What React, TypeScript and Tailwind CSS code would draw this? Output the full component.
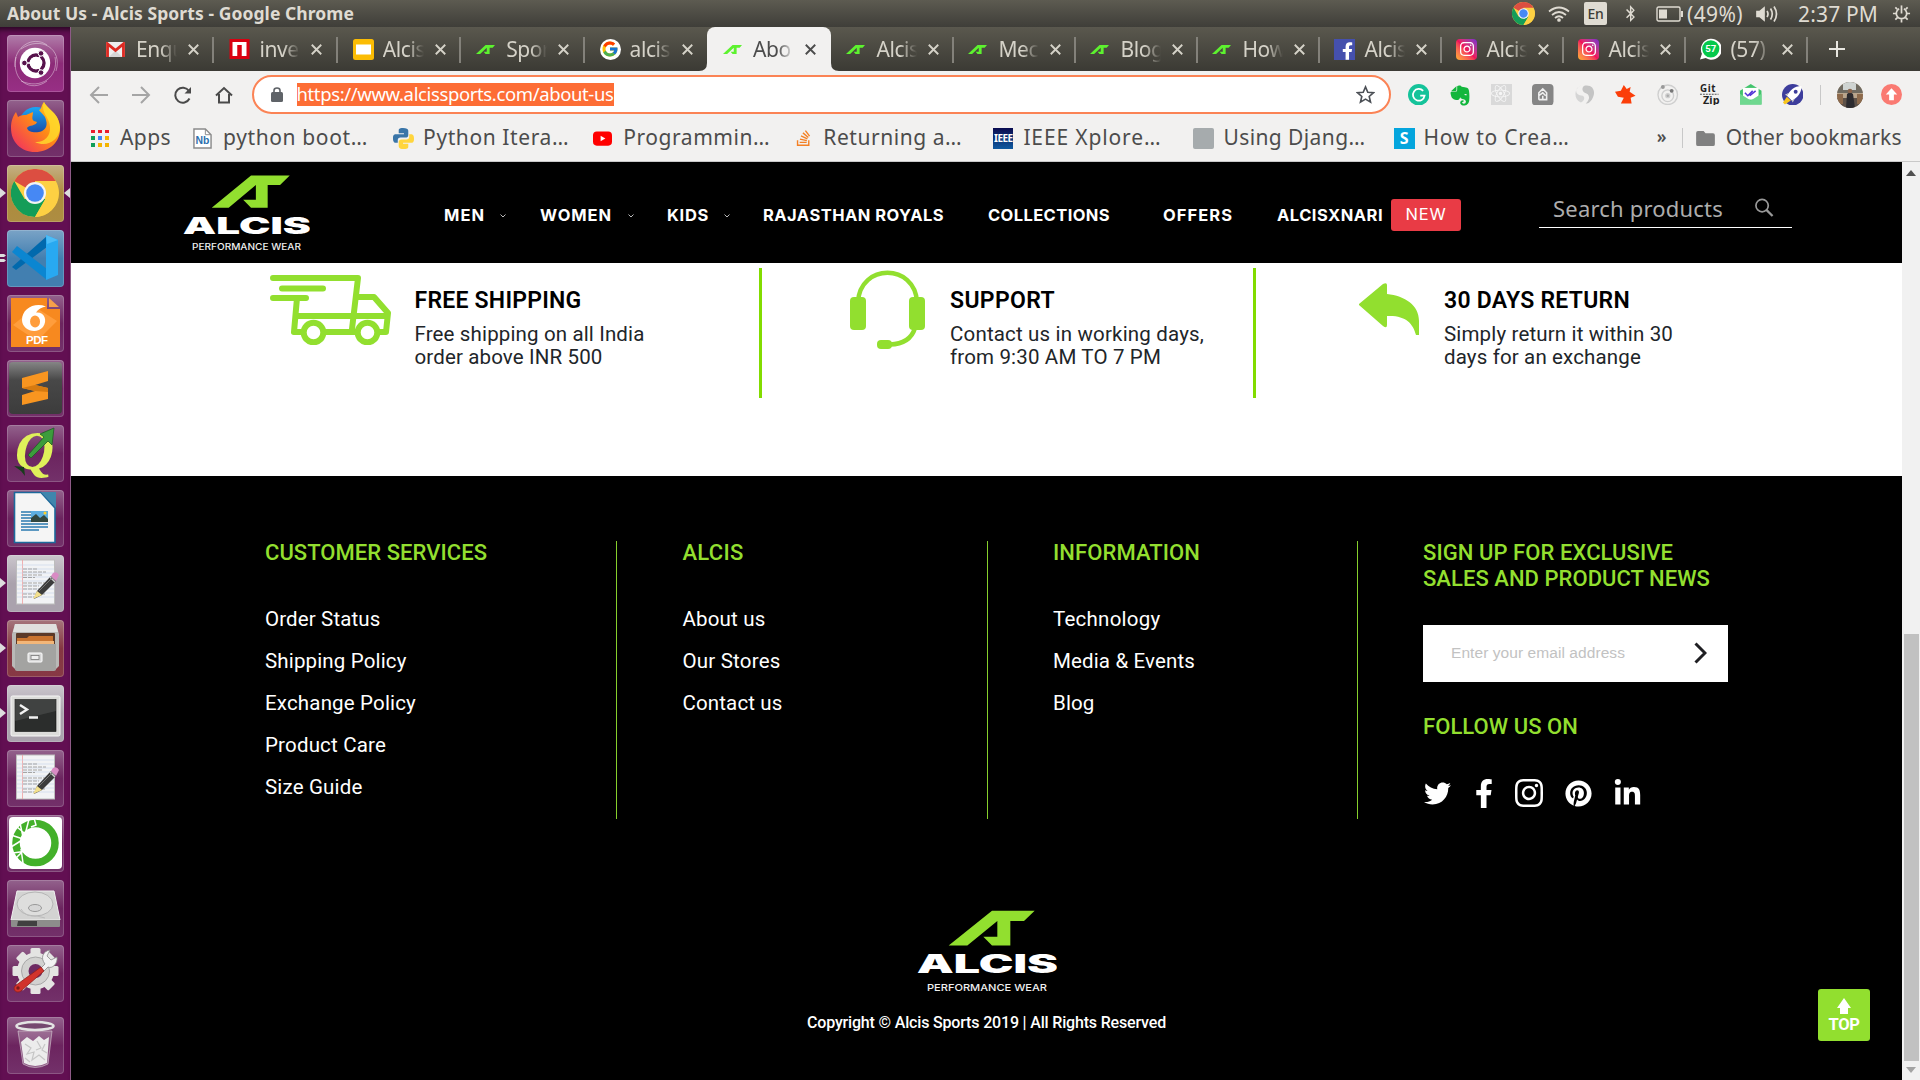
import { useLayoutEffect, useRef, useState, type ReactNode } from "react";
import { FaBluetoothB, FaFacebookF, FaInstagram, FaLinkedinIn, FaPinterest, FaStackOverflow, FaTwitter, FaEvernote, FaReact } from "react-icons/fa";
import { FcGoogle } from "react-icons/fc";

/** A single line of text whose letter spacing is adjusted to span a given width. */
function Fit({ w, className = "", children }: { w: number; className?: string; children: string }) {
  const ref = useRef<HTMLSpanElement>(null);
  const [spacing, setSpacing] = useState(0);
  useLayoutEffect(() => {
    if (ref.current) setSpacing((w - ref.current.getBoundingClientRect().width) / children.length);
  }, []);
  return (
    <span ref={ref} className={`inline-block whitespace-nowrap ${className}`} style={{ letterSpacing: `${spacing}px` }}>
      {children}
    </span>
  );
}

function Mark({ className }: { className: string }) {
  return (
    <svg viewBox="507 62 258 105" preserveAspectRatio="none" className={className} fill="currentColor">
      <path d="M507 167 637 62H765L733 93H692V167H637L611 141H653V93L563 167Z" />
    </svg>
  );
}

function BrandLogo({ className }: { className: string }) {
  return (
    <svg viewBox="412 60 420 248" preserveAspectRatio="none" className={className}>
      <path fill="#92df2f" d="M507 167 637 62H765L733 93H692V167H637L611 141H653V93L563 167Z" />
      <text x="411" y="251" fontFamily="Inter" fontWeight="900" fontSize="76" fill="#fff" textLength="424" lengthAdjust="spacingAndGlyphs">ALCIS</text>
      <text x="442" y="304" fontFamily="Inter" fontWeight="500" fontSize="29" fill="#f0f0f0" textLength="360" lengthAdjust="spacingAndGlyphs">PERFORMANCE WEAR</text>
    </svg>
  );
}

function ChromeIcon({ className }: { className: string }) {
  return (
    <svg viewBox="0 0 48 48" className={className}>
      <circle cx="24" cy="24" r="24" fill="#fdd043" />
      <path d="M24 24 3.2 12A24 24 0 0 1 44.8 12H24Z" fill="#dc4e41" />
      <path d="M3.2 12A24 24 0 0 0 24 48L34.4 30 13.6 30Z" fill="#149d58" />
      <path d="M24 13H44.8A24 24 0 0 1 24 48L34.4 30Z" fill="#fdd043" />
      <circle cx="24" cy="24" r="11" fill="#f3f3f3" />
      <circle cx="24" cy="24" r="8.8" fill="#4688f4" />
    </svg>
  );
}

/* ---------- launcher icons, each drawn on a 57 × 57 tile ---------- */

const svgTile = "block h-[57px] w-[57px]";

const UbuntuIcon = () => (
  <svg viewBox="0 0 57 57" className={svgTile}>
    <g fill="none" stroke="#fff" strokeOpacity=".4">
      <path d="M8 32C6 12 26 0 40 10M14 14C34 0 56 14 49 36M48 22C52 42 34 55 14 46M40 46C24 58 4 46 9 22" />
    </g>
    <circle cx="28" cy="28" r="15.2" fill="#fff" />
    <circle cx="29" cy="28" r="8" fill="none" stroke="#57124c" strokeWidth="3.4" />
    <path d="M29 28H15M29 28 36 16M29 28 36 40" stroke="#fff" strokeWidth="1.4" />
    <circle cx="29" cy="28" r="6.2" fill="#fff" />
    <g fill="#57124c" stroke="#fff" strokeWidth="1"><circle cx="17.4" cy="28" r="2.8" /><circle cx="34" cy="18.4" r="2.8" /><circle cx="34" cy="37.6" r="2.8" /></g>
  </svg>
);

const FirefoxIcon = () => (
  <svg viewBox="0 0 57 57" className={svgTile}>
    <defs>
      <linearGradient id="fx" x1="1" y1="0" x2="0" y2="1"><stop offset="0" stopColor="#ffe226" /><stop offset=".45" stopColor="#ff8a16" /><stop offset="1" stopColor="#f0246a" /></linearGradient>
      <linearGradient id="fb" x1="0" y1="0" x2="0" y2="1"><stop offset="0" stopColor="#19a7f5" /><stop offset="1" stopColor="#1b2f8e" /></linearGradient>
    </defs>
    <circle cx="29" cy="24" r="17" fill="url(#fb)" />
    <path d="M9 12 11 17C14 15 17 15 19 15L26 12C26 16 24 19 27 21L30 22C29 26 22 25 20 28C21 32 27 33 32 32C38 31 41 26 39 20C38 15 33 12 32 10C35 9 34 5 37 2C41 10 52 13 53 27C54 42 42 52 28 52C14 52 4 42 4 28C4 21 6 16 9 12Z" fill="url(#fx)" />
    <path d="M37 2C33 12 43 18 43 27C44 37 36 43 28 42C40 48 53 40 53 27C52 13 41 10 37 2Z" fill="#ffdc2c" fillOpacity=".8" />
  </svg>
);

const CodeIcon = () => (
  <svg viewBox="0 0 57 57" className={svgTile}>
    <path d="M5 37 9 40 40 17V6Z" fill="#0069ad" />
    <path d="M5 22 10 16 40 39V50Z" fill="#0b86d1" />
    <path d="M39 5 51 10V45L39 50Z" fill="#28a9f1" />
    <path d="M39 5 51 10 40 14Z" fill="#4cbdf8" />
  </svg>
);

const PdfIcon = () => (
  <svg viewBox="0 0 57 57" className={svgTile}>
    <path d="M4 3H40V14H53V52H4Z" fill="#f7891f" />
    <path d="M42 3 52 12H42Z" fill="#f7a04a" />
    <path d="M6 30 28 12 50 26 30 46Z" fill="#ff9d3c" />
    <path fillRule="evenodd" d="M39 11.500C27 7 15 14 15 25C15 35 29 40 36 32C41 25 37 16.500 29 17.500C31 14 35 12 39 11.500ZM28 20.500A5 6 0 1 0 28.100 32.500A5 6 0 0 0 28 20.500Z" fill="#fff" />
    <text x="19" y="49" fontFamily="Liberation Sans" fontWeight="700" fontSize="11.5" fill="#fff" textLength="22">PDF</text>
  </svg>
);

const SublimeIcon = () => (
  <svg viewBox="0 0 57 57" className={svgTile}>
    <defs><linearGradient id="sb" x1="0" y1="0" x2="0" y2="1"><stop offset="0" stopColor="#858585" /><stop offset=".35" stopColor="#484848" /><stop offset="1" stopColor="#3c3c3c" /></linearGradient></defs>
    <rect x="2" y="2" width="53" height="52" rx="4" fill="url(#sb)" />
    <path d="M41 11V21L28 25 41 28V39L15 45V35L28 31 15 28V18Z" fill="#f89520" />
    <path d="M15 28 28 25 41 28V32L28 31Z" fill="#d67a10" />
  </svg>
);

const QgisIcon = () => (
  <svg viewBox="0 0 57 57" className={svgTile}>
    <text x="8" y="44" fontFamily="Liberation Serif" fontWeight="700" fontStyle="italic" fontSize="54" fill="#dff05a" textLength="39" lengthAdjust="spacingAndGlyphs">Q</text>
    <path d="M47 3 45 20 41 16 24 33 21 30 37 12 33 9Z" fill="#3c9c3c" stroke="#1f5c24" strokeWidth=".8" />
    <path d="M7 41 17 42 18 51 14 46Z" fill="#183c1c" />
  </svg>
);

const WriterIcon = () => (
  <svg viewBox="0 0 57 57" className={svgTile}>
    <path d="M7.5 2.500H34L48 18V52.500H7.500Z" fill="#f5f5f5" stroke="#1c6a9c" strokeWidth="1.600" />
    <path d="M34 2H49V18Z" fill="#3f86ad" />
    <path d="M14 22H24M14 25H24M14 28H24M14 31H24M14 34H41M14 37H41M14 40H32" stroke="#2a7ab0" strokeWidth="1.4" />
    <rect x="24" y="21" width="17" height="11" fill="#5eaee0" />
    <path d="M24 32V28L29 24 33 28 37 25 41 29V32Z" fill="#33473f" />
    <circle cx="38" cy="23" r="1.500" fill="#ffd02c" />
  </svg>
);

const EditorIcon = () => (
  <svg viewBox="0 0 57 57" className={svgTile}>
    <rect x="9.500" y="5" width="38" height="44" fill="#f2f3f5" stroke="#bdbdbd" />
    <path d="M15.500 5V49" stroke="#f0a0a0" strokeWidth=".8" />
    <path d="M10 10H47M10 14H47M10 18H47M10 22H47M10 26H47M10 30H47M10 34H47M10 38H47M10 42H47" stroke="#c5d5ea" strokeWidth=".6" />
    <path d="M16 14H30M16 17H39M16 20H36M16 22.500H28M16 28H38M16 31H32M16 34H36M16 39H38M16 42H30" stroke="#a5a5a5" strokeWidth="1" strokeDasharray="4 1" />
    <path d="M30 36 44 21 49 26 35 40 27 44Z" fill="#3c3c3c" />
    <path d="M30 36 35 40 26 44Z" fill="#f3e08c" />
    <path d="M44 21 46 18Q50 16 52 20L49 26Z" fill="#d98bc4" />
    <path d="M43 22 48 27" stroke="#ccc" strokeWidth="1.600" />
    <path d="M32 36 45 23" stroke="#777" />
  </svg>
);

const FilesIcon = () => (
  <svg viewBox="0 0 57 57" className={svgTile}>
    <path d="M8 4H49L52 14V46L48 50H9L5 46V14Z" fill="#b9b9b7" />
    <path d="M8 4H49L51 12H6Z" fill="#e0e0de" />
    <rect x="9" y="13" width="39" height="12" rx="1" fill="#5b3a28" />
    <path d="M10 18H20L22 16H46V25H10Z" fill="#c9742f" />
    <path d="M10 21H47V25H10Z" fill="#f2b679" />
    <path d="M8 24H49V49Q49 51 47 51H10Q8 51 8 49Z" fill="#a3a3a1" />
    <rect x="21" y="33" width="14" height="9" rx="1" fill="#d6d6d6" stroke="#fff" />
    <rect x="24" y="35.500" width="8" height="4" fill="#eee" stroke="#777" strokeWidth=".8" />
  </svg>
);

const TerminalIcon = () => (
  <svg viewBox="0 0 57 57" className={svgTile}>
    <rect x="4" y="11" width="49" height="40" rx="1.500" fill="#dcdcda" stroke="#f6f6f6" />
    <rect x="8" y="14.500" width="41" height="32" fill="#2b2d2c" stroke="#111" strokeWidth=".6" />
    <path d="M8 14.500H49V26L8 36Z" fill="#fff" fillOpacity=".1" />
    <path d="M13 20 20 24.500 13 29M22 32.500H31" fill="none" stroke="#f3f3f3" strokeWidth="2.400" />
  </svg>
);

const AnacondaIcon = () => (
  <svg viewBox="0 0 57 57" className={svgTile}>
    <rect x="2" y="2" width="53" height="52" rx="4" fill="#fff" />
    <circle cx="28.500" cy="28" r="19.500" fill="none" stroke="#43b02a" strokeWidth="7.500" />
    <path d="M4 20 22 26M4 32 20 22M6 38 20 36M10 12 22 22M13 8 16 22M22 4 18 20M8 44 18 34M16 48 14 34M27 3 29 10 24 12" stroke="#fff" strokeWidth="1.500" fill="none" />
  </svg>
);

const DiskIcon = () => (
  <svg viewBox="0 0 57 57" className={svgTile}>
    <path d="M10 11H47L53 40H4Z" fill="#d3d3d2" stroke="#f0f0f0" />
    <path d="M4 40H53V46Q53 47 52 47H5Q4 47 4 46Z" fill="#8d8d8b" />
    <path d="M11 41H30V46H10Z" fill="#404040" />
    <ellipse cx="28" cy="24" rx="18" ry="12" fill="#dededd" stroke="#b5b5b5" />
    <ellipse cx="28" cy="28" rx="6.500" ry="3.500" fill="#d6d6d6" stroke="#999" />
    <path d="M14 29Q18 37 30 36L38 38" fill="none" stroke="#bcbcbc" />
  </svg>
);

const teeth = [0, 45, 90, 135];
const SettingsIcon = () => (
  <svg viewBox="0 0 57 57" className={svgTile}>
    <g fill="#e4e4e2">
      {teeth.map((a) => <rect key={a} x="23.500" y="3" width="10" height="46" rx="1.500" transform={`rotate(${a} 28.5 26)`} />)}
      <circle cx="28.500" cy="26" r="18.500" />
    </g>
    <circle cx="28.500" cy="26" r="14" fill="#d2d2d0" stroke="#a9a9a9" />
    <circle cx="28.500" cy="26" r="7" fill="#6d2a62" />
    <path d="M34 23 38 19C33 13 36 6 43 5L40 11 44 15 50 12C51 19 45 24 41 22L37 26Z" fill="#f2f2f2" stroke="#8a8a8a" strokeWidth=".8" />
    <path d="M34 22 37 26 14 46C10 49 5 45 8 41Z" fill="#d2332c" stroke="#8e1f1c" strokeWidth=".8" />
    <circle cx="11" cy="43" r="1.700" fill="#7b1c1a" />
  </svg>
);

const TrashIcon = () => (
  <svg viewBox="0 0 57 57" className={svgTile}>
    <path d="M11 14H45L41 47Q28 54 16 47Z" fill="#fff" fillOpacity=".22" stroke="#d8d0d6" strokeOpacity=".6" />
    <path d="M14 25 20 20 26 24 32 19 37 23 42 20 40 46Q28 52 17 46Z" fill="#ececec" />
    <path d="M18 27 24 31 20 37 27 35 25 43 32 38 38 43M30 24 34 31 29 33M38 27 35 33 40 36M18 41 23 45" fill="none" stroke="#c6c6c6" strokeWidth="1.200" />
    <ellipse cx="28" cy="9" rx="18.500" ry="4" fill="#75476f" stroke="#e3e3e3" strokeWidth="2.600" />
  </svg>
);

const plain = "bg-linear-to-b from-[#93628d] via-[#6c245f] to-[#73316a]";
const tiles: { icon: ReactNode; bg: string; left?: number; right?: boolean }[] = [
  { icon: <UbuntuIcon />, bg: "bg-linear-to-b from-[#b07daa] via-[#8c2a78] to-[#982f85]" },
  { icon: <FirefoxIcon />, bg: plain },
  { icon: <ChromeIcon className="m-[4px] h-[48px] w-[48px]" />, bg: "bg-linear-to-b from-[#c5b083] via-[#ad8b3c] to-[#ad8d42]", left: 1, right: true },
  { icon: <CodeIcon />, bg: "bg-linear-to-b from-[#7aa3c6] via-[#427fb0] to-[#427fb0]", left: 2 },
  { icon: <PdfIcon />, bg: plain },
  { icon: <SublimeIcon />, bg: plain },
  { icon: <QgisIcon />, bg: plain },
  { icon: <WriterIcon />, bg: plain },
  { icon: <EditorIcon />, bg: "bg-linear-to-b from-[#cbc6cd] via-[#aaa2ad] to-[#aaa2ad]", left: 1 },
  { icon: <FilesIcon />, bg: "bg-linear-to-b from-[#a5757c] via-[#853642] to-[#873945]", left: 1 },
  { icon: <TerminalIcon />, bg: "bg-linear-to-b from-[#cbc6cd] via-[#aaa2ad] to-[#aaa2ad]", left: 1 },
  { icon: <EditorIcon />, bg: plain },
  { icon: <AnacondaIcon />, bg: plain },
  { icon: <DiskIcon />, bg: plain },
  { icon: <SettingsIcon />, bg: plain },
  { icon: <TrashIcon />, bg: plain },
];

function Launcher() {
  return (
    <aside className="flex h-[1053px] w-[71px] shrink-0 flex-col gap-2 border-r border-[#8d5a86] bg-[#620f52] pt-2 pl-[7px] shadow-[inset_0_6px_5px_-3px_#2c0825]">
      {tiles.map((t, i) => (
        <div key={i} className={`relative h-[57px] w-[57px] shrink-0 rounded-[4px] shadow-[inset_0_0_0_1px_rgba(255,255,255,0.18)] ${t.bg} ${i === 15 ? "mt-[7px]" : ""}`}>
          {t.icon}
          {t.left === 1 && <svg viewBox="0 0 6 10" className="absolute top-[23px] -left-[7px] h-[10px] w-[6px]"><path d="M0 0 6 5 0 10Z" fill="#ddd" /></svg>}
          {t.left === 2 && <svg viewBox="0 0 6 10" className="absolute top-[23px] -left-[7px] h-[10px] w-[6px]"><path d="M0 1H4L6 2.500 4 4H0ZM0 6H4L6 7.500 4 9H0Z" fill="#ddd" /></svg>}
          {t.right && <svg viewBox="0 0 6 10" className="absolute top-[23px] -right-[6px] h-[10px] w-[6px]"><path d="M6 0 0 5 6 10Z" fill="#ddd" /></svg>}
        </div>
      ))}
    </aside>
  );
}

/* ---------- desktop panel ---------- */

function TopPanel() {
  return (
    <div className="flex h-[27px] items-center bg-linear-to-b from-[#5d5b51] to-[#3f3e39] pl-[7px] text-[#dfdbd2]">
      <Fit w={347} className="text-[17.500px] leading-[27px] font-bold">About Us - Alcis Sports - Google Chrome</Fit>
      <div className="ml-auto flex h-[27px] w-[408px] items-center">
        <ChromeIcon className="h-[23px] w-[23px]" />
        <svg viewBox="0 0 22 16" className="ml-[13px] h-[16px] w-[22px]" fill="none" stroke="currentColor" strokeWidth="1.700">
          <path d="M1 5.500Q11-2.500 21 5.500M4 9Q11 3 18 9M7 12Q11 8.500 15 12" /><circle cx="11" cy="14" r="1" fill="currentColor" />
        </svg>
        <div className="ml-[14px] flex h-[23px] w-[23px] items-center justify-center rounded-[2px] bg-[#dfdbd2] text-[14px] font-medium tracking-tight text-[#3c3b37]">En</div>
        <FaBluetoothB className="ml-[15px] h-[17px] w-[17px]" />
        <svg viewBox="0 0 27 16" className="ml-[17px] h-[16px] w-[27px]" fill="none" stroke="currentColor" strokeWidth="1.400">
          <rect x="1" y="1" width="23" height="14" rx="1.500" /><path d="M26 5V11" strokeWidth="2" /><rect x="3" y="3.500" width="8" height="9" fill="currentColor" stroke="none" />
        </svg>
        <Fit w={56} className="ml-[4px] text-[21px] leading-[26px]">(49%)</Fit>
        <svg viewBox="0 0 24 18" className="ml-[13px] h-[18px] w-[24px]" fill="none" stroke="currentColor" strokeWidth="1.700">
          <path d="M1 6.500H4L8 3V15L4 11.500H1Z" fill="currentColor" /><path d="M11 6Q13 9 11 12M14.500 3.500Q18 9 14.500 14.500M18 1.500Q23 9 18 16.500" />
        </svg>
        <Fit w={80} className="ml-[18px] text-[21px] leading-[26px]">2:37 PM</Fit>
        <svg viewBox="0 0 20 20" className="ml-[14px] h-[19px] w-[19px]" fill="none" stroke="currentColor" strokeWidth="1.800">
          <path d="M7.500 5A5.500 5.500 0 1 0 12.500 5" /><path d="M10 1.500V10" />
          <path d="M10 16V19.500M4.500 10H1M19 10H15.500M6 14 3.500 16.500M14 14 16.500 16.500M5.500 5.500 3.500 3.500M14.500 5.500 16.500 3.500" />
        </svg>
      </div>
    </div>
  );
}

/* ---------- browser tabs ---------- */

const GmailIcon = () => (
  <svg viewBox="0 0 20 16" className="h-[15px] w-[19px]"><rect width="20" height="16" rx="1" fill="#eee" /><path d="M3 16 10 9 17 16Z" fill="#d5d5d5" /><path d="M1.500 16V2L10 9 18.500 2V16" fill="none" stroke="#dd2a22" strokeWidth="3" /></svg>
);
const NotebookIcon = () => (
  <svg viewBox="0 0 20 20" className="h-[20px] w-[21px]"><rect width="20" height="20" fill="#da0010" /><path d="M3 3H17V17H12V6H8V17H3Z" fill="#fff" /><path d="M8 6H12V17H8Z" fill="#da0010" /></svg>
);
const SlidesIcon = () => (
  <svg viewBox="0 0 21 21" className="h-[21px] w-[21px]"><rect width="21" height="21" rx="2.500" fill="#fbbc04" /><rect x="3" y="5.500" width="15" height="10" fill="#fff" /></svg>
);
const GoogleIcon = () => <span className="flex h-[21px] w-[21px] items-center justify-center rounded-full bg-white"><FcGoogle className="h-[18px] w-[18px]" /></span>;
const AlcisIcon = () => <Mark className="h-[9px] w-[19px] text-[#5df22f]" />;
const FbIcon = () => <span className="flex h-[21px] w-[21px] items-end justify-end bg-[#4550ad] pr-[2px] text-white"><FaFacebookF className="h-[18px] w-[11px]" /></span>;
const InstaIcon = () => <span className="flex h-[21px] w-[21px] items-center justify-center rounded-[4px] bg-linear-to-bl from-[#7a1fd0] via-[#f0105a] to-[#ffb02a] text-white"><FaInstagram className="h-[16px] w-[16px]" /></span>;
const WhatsIcon = () => (
  <svg viewBox="0 0 22 22" className="h-[22px] w-[22px]"><path d="M0 22 2 16A11 11 0 1 1 6 20.500Z" fill="#fff" /><circle cx="11.300" cy="10.800" r="9" fill="#06c94c" /><text x="5.500" y="14.500" fontSize="10" fontWeight="700" fontFamily="Roboto" fill="#fff">57</text></svg>
);

const tabs = [
  { t: "Enqu", icon: <GmailIcon /> }, { t: "inve", icon: <NotebookIcon /> }, { t: "Alcis", icon: <SlidesIcon /> }, { t: "Spor", icon: <AlcisIcon /> }, { t: "alcis", icon: <GoogleIcon /> },
  { t: "Abo", icon: <AlcisIcon /> },
  { t: "Alcis", icon: <AlcisIcon /> }, { t: "Mec", icon: <AlcisIcon /> }, { t: "Blog", icon: <AlcisIcon /> }, { t: "How", icon: <AlcisIcon /> },
  { t: "Alcis", icon: <FbIcon /> }, { t: "Alcis", icon: <InstaIcon /> }, { t: "Alcis", icon: <InstaIcon /> }, { t: "(57)", icon: <WhatsIcon /> },
];

const Cross = () => <svg viewBox="0 0 10 10" className="h-[11px] w-[11px]" stroke="currentColor" strokeWidth="1.700"><path d="M.7.7 9.300 9.300M9.300.7.7 9.300" /></svg>;

function TabStrip() {
  return (
    <div className="flex h-[44px] items-center bg-linear-to-b from-[#5a584e] to-[#3b3a34] pl-[19px] text-[#d5d2c8]">
      {tabs.map((tab, i) => {
        const active = i === 5;
        return (
          <div key={i} className={`relative flex h-[44px] shrink-0 items-center ${active ? "w-[124.5px] rounded-t-[8px] bg-[#f2f1f0] text-[#4c4c4c]" : i < 5 ? "w-[123.4px]" : "w-[122px]"}`}>
            <span className={`flex w-[21px] justify-start ${i > 5 ? "ml-[15px]" : "ml-[16px]"}`}>{tab.icon}</span>
            <span className="ml-[9px] w-[41px] overflow-hidden text-[21px] leading-[28px] tracking-[-0.02em] whitespace-nowrap [mask-image:linear-gradient(to_right,black_60%,transparent)]">{tab.t}</span>
            <span className="ml-[11px]"><Cross /></span>
            {!active && i !== 4 && <span className="absolute top-[10px] -right-px h-[26px] w-[2px] bg-[#83817a]" />}
            {active && (
              <>
                <svg viewBox="0 0 8 8" className="absolute bottom-0 -left-[8px] h-[8px] w-[8px]"><path d="M0 8Q8 8 8 0V8Z" fill="#f2f1f0" /></svg>
                <svg viewBox="0 0 8 8" className="absolute -right-[8px] bottom-0 h-[8px] w-[8px]"><path d="M8 8Q0 8 0 0V8Z" fill="#f2f1f0" /></svg>
              </>
            )}
          </div>
        );
      })}
      <svg viewBox="0 0 16 16" className="ml-[22px] h-[16px] w-[16px] text-[#e8e6e0]" stroke="currentColor" strokeWidth="2"><path d="M8 0V16M0 8H16" /></svg>
    </div>
  );
}

/* ---------- toolbar ---------- */

const NavIcon = ({ children, dim }: { children: ReactNode; dim?: boolean }) => (
  <svg viewBox="0 0 20 20" className={`h-[20px] w-[20px] shrink-0 ${dim ? "text-[#a5a5a5]" : "text-[#4a4a4a]"}`} fill="none" stroke="currentColor" strokeWidth="2">{children}</svg>
);

const extensions: ReactNode[] = [
  <svg viewBox="0 0 22 22"><circle cx="11" cy="11" r="11" fill="#15c39a" /><path d="M15.500 7A6 6 0 1 0 17 12H12.500" fill="none" stroke="#fff" strokeWidth="1.800" /></svg>,
  <FaEvernote className="h-[23px] w-[22px] scale-x-110 text-[#12b63c]" />,
  <span className="flex h-full w-full items-center justify-center bg-[#d9d9d9]"><FaReact className="h-[19px] w-[19px] text-[#f6f6f6]" /></span>,
  <svg viewBox="0 0 22 22"><rect width="22" height="22" rx="4" fill="#858585" /><path d="M7 16V9L11 5 15 9V16H7M7 12 11 9 14 12M11 16V12" fill="none" stroke="#eee" strokeWidth="1.600" /></svg>,
  <svg viewBox="0 0 22 22"><path d="M9 1C0 3 0 12 9 12C12 14 10 18 7 19C-2 15 1 2 9 1Z" fill="#d5d5d5" /><path d="M10 2C18 0 22 6 20 12C18 18 15 20 12 20C18 14 15 10 11 9C8 7 8 4 10 2Z" fill="#c4c4c4" /></svg>,
  <svg viewBox="0 0 22 22"><path d="M0 8 6 7 9 1 12 5 16 3 15 8 21 12 16 14 17 20H6L9 14 3 13Z" fill="#fb3e09" /></svg>,
  <svg viewBox="0 0 22 22" fill="none" stroke="#cfcfcf" strokeWidth="1.400"><circle cx="11" cy="11" r="10" /><circle cx="11" cy="12" r="6" /><circle cx="11" cy="12" r="2" fill="#aaa" /><circle cx="6" cy="3" r="2" fill="#999" stroke="none" /><circle cx="15" cy="7" r="2" fill="#777" stroke="none" /></svg>,
  <svg viewBox="0 0 22 22"><text x="1" y="8" fontFamily="Open Sans" fontWeight="700" fontSize="10" fill="#222" textLength="16">Git</text><path d="M1 10.500H20" stroke="#555" strokeDasharray="2 1" strokeWidth="1.200" /><text x="4" y="20.500" fontFamily="Open Sans" fontWeight="700" fontSize="11" fill="#222" textLength="17">Zip</text></svg>,
  <svg viewBox="0 0 22 22"><path d="M0 7 11 0 22 7V21H0Z" fill="#42c46c" /><rect x="3" y="4" width="16" height="12" fill="#fff" /><path d="M5 9 8 12 13 7M10 12 16 7" fill="none" stroke="#5336d6" strokeWidth="1.600" /><path d="M0 10 11 17 22 10V21H0Z" fill="#6fd88f" /></svg>,
  <svg viewBox="0 0 22 22"><circle cx="11" cy="11" r="11" fill="#3d3d9c" /><path d="M20 2C12 2 8 7 5 12L10 17C16 14 20 9 20 2Z" fill="#fff" /><circle cx="14" cy="8" r="2" fill="#3d3d9c" /><path d="M5 13 9 17 3 21 1 19Z" fill="#f8c51c" /><path d="M7 9 3 11 5 12ZM13 15 11 19 10 17Z" fill="#ccc" /></svg>,
];

function Toolbar() {
  return (
    <div className="flex h-[45px] items-center pl-[18px]">
      <NavIcon dim><path d="M19 10H2M10 2 2 10 10 18" /></NavIcon>
      <span className="w-[21.5px]" />
      <NavIcon dim><path d="M1 10H18M10 2 18 10 10 18" /></NavIcon>
      <span className="w-[22px]" />
      <NavIcon><path d="M16.500 13.500A7.500 7.500 0 1 1 16 6" /><path d="M18 2V8.500H11.500Z" fill="currentColor" stroke="none" /></NavIcon>
      <span className="w-[21px]" />
      <NavIcon><path d="M2 10.500 10 3 18 10.500M5 9V17.500H15V9" /></NavIcon>
      <div className="ml-[18px] flex h-[39px] w-[1139px] items-center rounded-full border-[2.5px] border-[#fb8355] bg-white">
        <svg viewBox="0 0 12 15" className="ml-[17px] h-[15px] w-[12px] text-[#5f6368]"><rect y="5" width="12" height="10" rx="1.500" fill="currentColor" /><path d="M3 6V3.500Q3 1 6 1T9 3.500V6" fill="none" stroke="currentColor" strokeWidth="1.600" /></svg>
        <Fit w={317} className="ml-[14px] h-[23px] bg-[#fd6d35] text-[18.500px] leading-[22px] text-white">https://www.alcissports.com/about-us</Fit>
        <svg viewBox="0 0 20 20" className="mr-[14px] ml-auto h-[19px] w-[19px]" fill="none" stroke="#4b4f55" strokeWidth="1.700"><path d="M10 2 12.400 7.600 18.500 8.100 13.900 12.100 15.300 18 10 14.900 4.700 18 6.100 12.100 1.500 8.100 7.600 7.600Z" /></svg>
      </div>
      <div className="ml-[17px] flex items-center gap-[20.100px]">
        {extensions.map((e, i) => <span key={i} className="h-[21.500px] w-[21.500px] *:block">{e}</span>)}
      </div>
      <span className="ml-[17px] h-[20px] w-px bg-[#c8c8c8]" />
      <svg viewBox="0 0 26 26" className="ml-[16px] h-[26px] w-[26px]">
        <clipPath id="av"><circle cx="13" cy="13" r="13" /></clipPath>
        <g clipPath="url(#av)"><rect width="26" height="26" fill="#b9a58c" /><rect width="26" height="11" fill="#6f6a60" /><rect x="6" width="13" height="8" fill="#cfd4d2" /><rect y="16" width="26" height="10" fill="#5d5148" /><path d="M9 26 10 12Q13 9 16 12L18 26Z" fill="#2c2b2f" /><circle cx="13" cy="9" r="2.300" fill="#8a644c" /><path d="M0 12H6V22H0ZM20 12H26V22H20Z" fill="#8d6a4c" /></g>
      </svg>
      <svg viewBox="0 0 22 22" className="ml-[18px] h-[21px] w-[21px]"><circle cx="11" cy="11" r="11" fill="#fa7a72" /><path d="M11 4.500 17 11H13.500V17H8.500V11H5Z" fill="#fff" /></svg>
    </div>
  );
}

const bookmarks: { label: string; w: number; icon: ReactNode }[] = [
  { label: "python boot…", w: 145, icon: <svg viewBox="0 0 20 22" className="h-[21px] w-[19px]"><path d="M1 1H13L19 7V21H1Z" fill="#fff" stroke="#8a8a8a" strokeWidth="1.500" /><path d="M13 1V7H19" fill="none" stroke="#8a8a8a" /><text x="2.500" y="17" fontFamily="Liberation Sans" fontSize="11" fontWeight="700" fill="#2c6fae">Nb</text></svg> },
  { label: "Python Itera…", w: 146, icon: <svg viewBox="0 0 22 22" className="h-[21px] w-[21px]"><path d="M10.500 0C6 0 6 1.500 6 3V5.500H11.500V6.500H3C0 6.500 0 9 0 11S.5 15.500 3 15.500H5V12.500C5 11 6 10 8 10H13C15 10 16 9 16 7.500V3C16 1 14 0 10.500 0Z" fill="#3a75a8" /><path d="M11.500 22C16 22 16 20.500 16 19V16.500H10.500V15.500H19C22 15.500 22 13 22 11S21.500 6.500 19 6.500H17V9.500C17 11 16 12 14 12H9C7 12 6 13 6 14.500V19C6 21 8 22 11.500 22Z" fill="#ffd53d" /></svg> },
  { label: "Programmin…", w: 147, icon: <svg viewBox="0 0 20 15" className="h-[15px] w-[19px]"><rect width="20" height="15" rx="4" fill="#f00" /><path d="M8 4.500 13 7.500 8 10.500Z" fill="#fff" /></svg> },
  { label: "Returning a…", w: 139, icon: <FaStackOverflow className="ml-[2px] h-[18px] w-[17px] text-[#f48024]" /> },
  { label: "IEEE Xplore…", w: 138, icon: <span className="flex h-[21px] w-[20px] items-center justify-center bg-linear-to-b from-[#0a0a50] to-[#0e5aa0] text-[10px] font-bold tracking-tighter text-white">IEEE</span> },
  { label: "Using Djang…", w: 142, icon: <span className="h-[21px] w-[21px] rounded-[2px] bg-[#a6abad]" /> },
  { label: "How to Crea…", w: 146, icon: <span className="flex h-[21px] w-[21px] items-center justify-center bg-[#04a5dd] text-[16px] leading-none font-bold text-white">S</span> },
];

const appDots = ["bg-[#ea1c2c]", "bg-[#ea1c2c]", "bg-[#ea1c2c]", "bg-[#0f9d58]", "bg-[#4285f4]", "bg-[#f4b400]", "bg-[#0f9d58]", "bg-[#f4b400]", "bg-[#f4b400]"];

function BookmarksBar() {
  return (
    <div className="flex h-[42px] items-center pl-[20px] text-[21px] leading-[28px] text-[#4c4c4c]">
      <span className="grid h-[17px] w-[18px] grid-cols-3 gap-[3px]">
        {appDots.map((c, i) => <span key={i} className={c} />)}
      </span>
      <span className="-mt-[2px] ml-[11px] w-[73px]"><Fit w={51}>Apps</Fit></span>
      {bookmarks.map((b) => (
        <span key={b.label} className="flex w-[200.1px] items-center">
          <span className="flex w-[30px]">{b.icon}</span>
          <Fit w={b.w} className="-mt-[2px]">{b.label}</Fit>
        </span>
      ))}
      <span className="-mt-[3px] ml-[63px] w-[10px] text-center text-[17px] font-semibold">»</span>
      <span className="ml-[15px] h-[20px] w-px bg-[#c8c8c8]" />
      <svg viewBox="0 0 20 16" className="ml-[13px] h-[15px] w-[19px]"><path d="M0 2Q0 0 2 0H8L10 2.500H18Q20 2.500 20 4.500V14Q20 16 18 16H2Q0 16 0 14Z" fill="#808080" /></svg>
      <Fit w={176} className="-mt-[2px] ml-[11px]">Other bookmarks</Fit>
    </div>
  );
}

/* ---------- web page ---------- */

const Caret = () => <svg viewBox="0 0 6 4" className="mt-[2px] h-[4px] w-[6px]" fill="none" stroke="#bbb"><path d="M.5.5 3 3 5.500.5" /></svg>;

function SiteHeader() {
  return (
    <header className="flex h-[101px] bg-black text-white">
      <BrandLogo className="mt-[13px] ml-[112px] h-[76px] w-[127px] shrink-0" />
      <nav className="ml-[134px] flex h-[106px] items-center font-['Inter'] text-[16.500px] font-bold">
        <Fit w={41}>MEN</Fit><span className="w-[55px] pl-[15px]"><Caret /></span>
        <Fit w={72}>WOMEN</Fit><span className="w-[55px] pl-[16px]"><Caret /></span>
        <Fit w={42}>KIDS</Fit><span className="w-[54px] pl-[15px]"><Caret /></span>
        <Fit w={181} className="mr-[44px]">RAJASTHAN ROYALS</Fit>
        <Fit w={122} className="mr-[53px]">COLLECTIONS</Fit>
        <Fit w={70} className="mr-[44px]">OFFERS</Fit>
        <Fit w={106}>ALCISXNARI</Fit>
        <span className="ml-[8px] flex h-[32px] w-[70px] items-center justify-center rounded-[3px] bg-[#e93b45] pb-[2px] font-normal"><Fit w={41}>NEW</Fit></span>
      </nav>
      <div className="mt-[26px] ml-[78px] flex h-[40px] w-[253px] items-center border-b border-white pl-[14px] text-[#adadad]">
        <Fit w={170} className="text-[22px] leading-[36px]">Search products</Fit>
        <svg viewBox="0 0 20 20" className="ml-[31px] h-[19px] w-[20px]" fill="none" stroke="#999" strokeWidth="1.800"><circle cx="8" cy="8" r="6.500" /><path d="M12.500 12.500 19 19" strokeWidth="2.400" /></svg>
      </div>
    </header>
  );
}

const TruckIcon = () => (
  <svg viewBox="0 0 121 70" className="h-[70px] w-[121px]" fill="none" stroke="#92df2f" strokeWidth="6" strokeLinecap="round" strokeLinejoin="round">
    <path d="M3 3H88L82 54M12 13.500H53M3 23H36M27 23 24 57H32M54 57H86M108 57H116L118 38 104 22H87M27 41H117" />
    <circle cx="43.500" cy="57.500" r="9.800" /><circle cx="97.500" cy="57.500" r="9.800" />
  </svg>
);
const HeadsetIcon = () => (
  <svg viewBox="0 0 75 79" className="h-[79px] w-[75px]">
    <path d="M8 32C10-7 65-7 67 32M65 58Q60 74 40 74.500" fill="none" stroke="#92df2f" strokeWidth="4.500" />
    <g fill="#92df2f"><rect y="27" width="16" height="33" rx="4" /><rect x="59" y="27" width="16" height="33" rx="4" /><rect x="27" y="70" width="15" height="9" rx="4" /></g>
  </svg>
);
const ReturnIcon = () => (
  <svg viewBox="0 0 60 53" className="h-[53px] w-[60px]" fill="#92df2f"><path d="M0 21 24 1Q28-1 28 2V11C46 13 60 22 60 38V52H57C54 40 46 32 28 33V42Q28 46 24 43L0 22Z" /></svg>
);

function Feature({ title, tw, lines, ws }: { title: string; tw: number; lines: [string, string]; ws: [number, number] }) {
  return (
    <div className="flex flex-col pt-[25px] leading-[23px] text-[#212529]">
      <Fit w={tw} className="mb-[9px] self-start text-[23px] leading-[26px] font-semibold text-black">{title}</Fit>
      <Fit w={ws[0]} className="self-start text-[20.500px]">{lines[0]}</Fit>
      <Fit w={ws[1]} className="self-start text-[20.500px]">{lines[1]}</Fit>
    </div>
  );
}

function Features() {
  return (
    <section className="flex h-[213px] bg-white font-['Roboto']">
      <div className="flex w-[688px] pl-[199px]">
        <span className="mt-[12px] w-[144.500px]"><TruckIcon /></span>
        <Feature title="FREE SHIPPING" tw={167} lines={["Free shipping on all India", "order above INR 500"]} ws={[230, 188]} />
      </div>
      <span className="mt-[5px] h-[130px] w-[3px] bg-[#82dc00]" />
      <div className="flex w-[491px] pl-[88px]">
        <span className="mt-[7px] w-[100px]"><HeadsetIcon /></span>
        <Feature title="SUPPORT" tw={105} lines={["Contact us in working days,", "from 9:30 AM TO 7 PM"]} ws={[254, 211]} />
      </div>
      <span className="mt-[5px] h-[130px] w-[3px] bg-[#82dc00]" />
      <div className="flex pl-[103px]">
        <span className="mt-[20px] w-[85px]"><ReturnIcon /></span>
        <Feature title="30 DAYS RETURN" tw={186} lines={["Simply return it within 30", "days for an exchange"]} ws={[229, 197]} />
      </div>
    </section>
  );
}

type Link = [string, number];
function LinkColumn({ head, links, className }: { head: Link; links: Link[]; className: string }) {
  return (
    <div className={`flex h-[278px] flex-col border-r border-[#86cf2c] ${className}`}>
      <Fit w={head[1]} className="-mt-px mb-[32px] self-start text-[22px] leading-[26px] font-medium text-[#92df2f]">{head[0]}</Fit>
      {links.map(([label, w]) => <Fit key={label} w={w} className="self-start text-[20.500px] leading-[42px]">{label}</Fit>)}
    </div>
  );
}

function SiteFooter() {
  return (
    <footer className="relative h-[604px] bg-black pt-[65px] font-['Roboto'] text-white">
      <div className="flex h-[369px] pl-[194px]">
        <LinkColumn className="w-[352px]" head={["CUSTOMER SERVICES", 222]} links={[["Order Status", 115.500], ["Shipping Policy", 141.500], ["Exchange Policy", 151], ["Product Care", 121], ["Size Guide", 97.500]]} />
        <LinkColumn className="w-[371px] pl-[65.500px]" head={["ALCIS", 61]} links={[["About us", 83], ["Our Stores", 98], ["Contact us", 100]]} />
        <LinkColumn className="w-[370px] pl-[65px]" head={["INFORMATION", 147]} links={[["Technology", 107.500], ["Media & Events", 142], ["Blog", 41.500]]} />
        <div className="flex w-[305px] flex-col pl-[65px] text-[22px] leading-[26px] font-medium text-[#92df2f]">
          <Fit w={250} className="-mt-px self-start">SIGN UP FOR EXCLUSIVE</Fit>
          <Fit w={287} className="self-start">SALES AND PRODUCT NEWS</Fit>
          <div className="mt-[33px] flex h-[57px] w-[305px] items-center bg-white pb-[2px] pl-[28px] font-['Liberation_Sans'] font-normal text-[#c2c2c2]">
            <Fit w={174} className="text-[15.500px]">Enter your email address</Fit>
            <svg viewBox="0 0 13 22" className="ml-[69px] h-[22px] w-[13px]" fill="none" stroke="#1f1f23" strokeWidth="3"><path d="M1.500 1.500 11 11 1.500 20.500" /></svg>
          </div>
          <Fit w={155} className="mt-[32px] self-start">FOLLOW US ON</Fit>
          <div className="mt-[38px] flex h-[30px] w-[230px] items-center text-white">
            <FaTwitter className="ml-[1px] h-[27px] w-[27px]" />
            <FaFacebookF className="ml-[24px] h-[29px] w-[18px]" />
            <FaInstagram className="ml-[20px] h-[32px] w-[32px]" />
            <FaPinterest className="ml-[20px] h-[27px] w-[27px]" />
            <FaLinkedinIn className="ml-[21px] h-[29px] w-[29px]" />
          </div>
        </div>
      </div>
      <div className="flex flex-col items-center">
        <BrandLogo className="h-[82px] w-[140px]" />
        <Fit w={359} className="mt-[19px] text-[16px] leading-[24px] font-medium">Copyright © Alcis Sports 2019 | All Rights Reserved</Fit>
      </div>
      <button className="absolute right-[32px] bottom-[39px] flex h-[52px] w-[52px] flex-col items-center rounded-[3px] bg-[#92df2f]">
        <svg viewBox="0 0 14 16" className="mt-[9px] h-[16px] w-[14px]" fill="#fff"><path d="M7 0 14 10H11V16H3V10H0Z" /></svg>
        <Fit w={31} className="mt-px text-[16.500px] leading-[20px] font-bold">TOP</Fit>
      </button>
    </footer>
  );
}

function Scrollbar() {
  return (
    <div className="flex w-[18px] shrink-0 flex-col items-center bg-[#f1f1f1]">
      <svg viewBox="0 0 10 6" className="mt-[8px] h-[6px] w-[10px]"><path d="M0 6 5 0 10 6Z" fill="#505050" /></svg>
      <div className="mt-[458px] h-[427px] w-[15px] bg-[#c1c1c1]" />
      <svg viewBox="0 0 10 6" className="mt-[6px] h-[6px] w-[10px]"><path d="M0 0 5 6 10 0Z" fill="#a3a3a3" /></svg>
    </div>
  );
}

export default function App() {
  return (
    <div className="h-[1080px] w-[1920px] overflow-hidden font-['Noto_Sans',sans-serif]">
      <TopPanel />
      <div className="flex">
        <Launcher />
        <main className="w-[1849px]">
          <TabStrip />
          <div className="h-[91px] border-b border-[#c9c9c9] bg-[#f2f1f0] pt-px">
            <Toolbar />
            <BookmarksBar />
          </div>
          <div className="flex">
            <div className="w-[1831px]">
              <SiteHeader />
              <Features />
              <SiteFooter />
            </div>
            <Scrollbar />
          </div>
        </main>
      </div>
    </div>
  );
}
